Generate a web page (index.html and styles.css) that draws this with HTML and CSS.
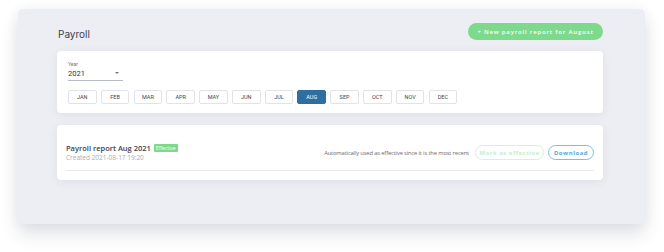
FILE: index.html
```html
<!DOCTYPE html>
<html>
<head>
<meta charset="utf-8">
<link rel="stylesheet" href="styles.css">
</head>
<body>
<div class="page">
  <div class="panel">
    <div class="header">
      <h1 class="title">Payroll</h1>
      <button class="btn-new">+ New payroll report for August</button>
    </div>
    <div class="card filter">
      <div class="select">
        <div class="select-label">Year</div>
        <div class="select-value"><span>2021</span><span class="caret"></span></div>
      </div>
      <div class="months">
        <button class="month">JAN</button>
        <button class="month">FEB</button>
        <button class="month">MAR</button>
        <button class="month">APR</button>
        <button class="month">MAY</button>
        <button class="month">JUN</button>
        <button class="month">JUL</button>
        <button class="month active">AUG</button>
        <button class="month">SEP</button>
        <button class="month">OCT</button>
        <button class="month">NOV</button>
        <button class="month">DEC</button>
      </div>
    </div>
    <div class="card report">
      <div class="report-row">
        <div class="report-info">
          <div class="report-title">Payroll report Aug 2021 <span class="badge">Effective</span></div>
          <div class="report-date">Created 2021-08-17 19:20</div>
        </div>
        <div class="report-actions">
          <span class="note">Automatically used as effective since it is the most recent</span>
          <button class="btn-outline btn-mark">Mark as effective</button>
          <button class="btn-outline btn-download">Download</button>
        </div>
      </div>
      <div class="divider"></div>
    </div>
  </div>
</div>
</body>
</html>
```
FILE: styles.css
```css
* { box-sizing: border-box; }
html, body { margin: 0; padding: 0; background: #ffffff; }
body { font-family: "Open Sans", "Liberation Sans", sans-serif; }
.page { padding: 9px 19px 28px 18px; }
.panel {
  width: 627px;
  height: 215px;
  background: #eceef3;
  border-radius: 5px;
  padding: 14px 42px 0 39px;
  box-shadow: 0 10px 18px rgba(40, 50, 80, 0.14), 0 0 14px rgba(40, 50, 80, 0.05);
}
.header {
  display: flex;
  justify-content: space-between;
  align-items: center;
  height: 17px;
  margin-bottom: 11px;
}
.title {
  margin: 5px 0 0 1px;
  font-family: "Inter", "Roboto", sans-serif;
  font-weight: 400;
  font-size: 10px;
  color: #3b3f48;
}
.btn-new {
  height: 17px;
  width: 135px;
  border: none;
  border-radius: 9px;
  background: #7dd98c;
  color: #ffffff;
  font-family: "Open Sans", sans-serif;
  font-weight: 600;
  font-size: 6px;
  letter-spacing: 0.8px;
  padding: 0;
}
.card {
  background: #ffffff;
  border-radius: 4px;
  box-shadow: 0 2px 8px rgba(60, 70, 100, 0.08);
}
.filter {
  height: 62px;
  padding: 10px 11px 0 11px;
}
.select { width: 55px; }
.select-label {
  font-family: "Roboto", sans-serif;
  font-size: 5px;
  color: #777;
  line-height: 6px;
}
.select-value {
  display: flex;
  justify-content: space-between;
  align-items: center;
  font-family: "Roboto", sans-serif;
  font-size: 7.5px;
  color: #333;
  height: 14px;
  border-bottom: 1px solid #b8bcc4;
  padding-bottom: 1px;
}
.caret {
  width: 0; height: 0;
  border-left: 2.5px solid transparent;
  border-right: 2.5px solid transparent;
  border-top: 2.5px solid #777;
  margin-right: 4px;
}
.months {
  display: flex;
  gap: 4.2px;
  margin-top: 9px;
}
.month {
  width: 28.6px;
  height: 14px;
  padding: 0;
  background: #ffffff;
  border: 1px solid #e1e3e8;
  border-radius: 2px;
  font-family: "Roboto", sans-serif;
  font-size: 5.5px;
  color: #444;
}
.month.active {
  background: #2f6e9e;
  border-color: #2f6e9e;
  color: #ffffff;
}
.report {
  margin-top: 12px;
  height: 55px;
  padding: 18px 9px 0 9px;
}
.report-row {
  display: flex;
  justify-content: space-between;
  align-items: center;
}
.report-title {
  font-size: 7.5px;
  font-weight: 600;
  color: #3e424d;
  line-height: 10px;
  display: flex;
  align-items: center;
  gap: 3px;
}
.badge {
  background: #7dd98c;
  color: #fff;
  font-size: 5px;
  font-weight: 400;
  line-height: 8px;
  padding: 0 2px;
  border-radius: 1px;
}
.report-date {
  font-size: 6.5px;
  color: #a9adb5;
  line-height: 9px;
}
.report-actions {
  display: flex;
  align-items: center;
  gap: 4px;
}
.note {
  font-size: 5.8px;
  color: #666a72;
  letter-spacing: -0.15px;
  margin-right: 2px;
}
.btn-outline {
  height: 15px;
  border-radius: 8px;
  background: #fff;
  font-family: "Open Sans", sans-serif;
  font-weight: 700;
  font-size: 6px;
  letter-spacing: 0.5px;
  padding: 0;
}
.btn-mark {
  width: 69px;
  border: 1px solid #d6f1da;
  color: #c8ecce;
}
.btn-download {
  width: 46px;
  border: 1px solid #7dbfe2;
  color: #5aabd8;
}
.divider {
  height: 1px;
  background: #e7e9ed;
  margin-top: 8px;
}
```
